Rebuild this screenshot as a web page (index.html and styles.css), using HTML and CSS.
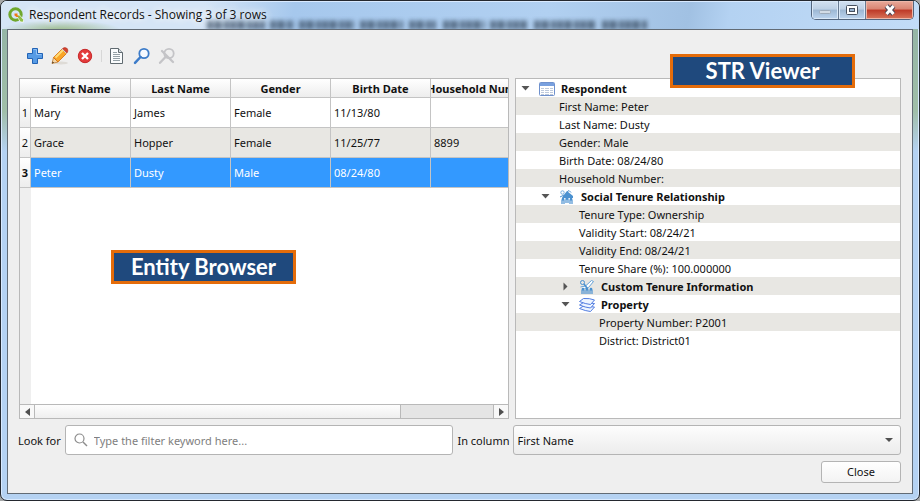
FILE: index.html
```html
<!DOCTYPE html>
<html lang="en">
<head>
<meta charset="utf-8">
<title>Respondent Records</title>
<link rel="stylesheet" href="styles.css">
</head>
<body>
<div class="window">
  <header class="titlebar">
    <svg class="backdrop" width="450" height="14" viewBox="0 0 450 14" aria-hidden="true">
      <g stroke="#26384c" stroke-width="9" stroke-dasharray="6 1 8 2 5 1">
        <path d="M2 9h58M65 9h24M94 9h55M155 9h43M204 9h27M238 9h42M285 9h37M329 9h63M397 9h46"/>
      </g>
    </svg>
    <svg class="app-icon" width="16" height="16" viewBox="0 0 16 16">
      <circle cx="7.5" cy="7.5" r="5.7" fill="none" stroke="#6fa82c" stroke-width="3"/>
      <path d="M8 8h3.5l4 4.5V15h-3z" fill="#8fc04a" stroke="#fff" stroke-width=".7"/>
      <path d="M6.5 6.5h3v2l1.500 1.500h-2.500l-2-1.500z" fill="#ee7913"/>
    </svg>
    <h1 class="title">Respondent Records - Showing 3 of 3 rows</h1>
    <div class="caption-buttons">
      <button class="cap" aria-label="Minimize"><svg width="14" height="12" viewBox="0 0 14 12"><rect x="1.500" y="6.500" width="11" height="3" rx="1" fill="#d3dce6" stroke="#9eabba"/></svg></button>
      <button class="cap" aria-label="Maximize"><svg width="14" height="12" viewBox="0 0 14 12"><rect x="1.500" y="1.500" width="11" height="9" rx="1" fill="#fff" stroke="#47505f"/><rect x="4.500" y="4.500" width="5" height="3" fill="#9bb5d2" stroke="#47505f"/></svg></button>
      <button class="cap cap-close" aria-label="Close window"><svg width="14" height="12" viewBox="0 0 14 12"><path d="M3.500 2l7 8M10.500 2l-7 8" stroke="#4b4353" stroke-width="5"/><path d="M3.500 2l7 8M10.500 2l-7 8" stroke="#fff" stroke-width="3"/></svg></button>
    </div>
  </header>

  <main class="content">
    <div class="toolbar">
      <button class="tool" aria-label="Add"><svg width="18" height="18" viewBox="0 0 18 18"><path d="M6.500 1.500h5v5h5v5h-5v5h-5v-5h-5v-5h5z" fill="#579be5" stroke="#2263b5" stroke-linejoin="round"/><path d="M7.500 2.500h3v5h5" fill="none" stroke="#91c1f4"/></svg></button>
      <button class="tool" aria-label="Edit"><svg width="18" height="18" viewBox="0 0 18 18"><ellipse cx="10" cy="16" rx="7" ry="1.500" fill="#dedbd6"/><path d="M1 16.500l1.500-6 4.500 4.500z" fill="#f3d6a8" stroke="#b86b16" stroke-width=".7"/><path d="M2.500 10.500L11 2l4.500 4.500L7 15z" fill="#f9a528" stroke="#d36b0c" stroke-width=".8"/><path d="M4.500 10.500L12 3" stroke="#ffdc77" stroke-width="2"/><path d="M11.500 1.500q2-1.500 4-.5l1 1q1 2-.5 4z" fill="#d6432c" stroke="#ad2d22" stroke-width=".6"/><path d="M11 2l4.500 4.500" stroke="#d0d0d0"/><path d="M1 16.500l.7-2 1.400 1.300z" fill="#47331e"/></svg></button>
      <button class="tool" aria-label="Delete"><svg width="18" height="18" viewBox="0 0 18 18"><circle cx="9" cy="9" r="6.700" fill="#e33b3b" stroke="#c72829"/><path d="M6 6l6 6M12 6l-6 6" stroke="#fff" stroke-width="2.300"/></svg></button>
      <span class="tool-divider"></span>
      <button class="tool" aria-label="View document"><svg width="18" height="18" viewBox="0 0 18 18"><path d="M2.500 1.500h8l4 4v11h-12z" fill="#fafcfd" stroke="#606a70"/><path d="M10.500 1.500v4h4" fill="#d4dbe0" stroke="#606a70"/><path d="M5 5.500h4M5 7.500h7M5 9.500h7M5 11.500h7M5 13.500h7" stroke="#94a0a6"/></svg></button>
      <button class="tool" aria-label="Search"><svg width="18" height="18" viewBox="0 0 18 18"><circle cx="11" cy="6.500" r="4.700" fill="#f5f9ff" stroke="#3d7cc9" stroke-width="1.800"/><path d="M7.500 10L2 15.800" stroke="#3d7cc9" stroke-width="2.500" stroke-linecap="round"/></svg></button>
      <button class="tool" aria-label="Clear search" disabled><svg width="18" height="18" viewBox="0 0 18 18"><circle cx="11" cy="6.500" r="4.700" fill="none" stroke="#c4c4c7" stroke-width="1.800"/><path d="M7.500 10L2 15.800M4 4l11 11" stroke="#c4c4c7" stroke-width="2.300" stroke-linecap="round"/></svg></button>
    </div>

    <div class="panes">
      <section class="browser" aria-label="Entity Browser">
        <div class="table-area">
          <table class="records">
            <colgroup><col class="col-num"><col class="col"><col class="col"><col class="col"><col class="col"><col class="col"></colgroup>
            <thead><tr><th class="corner"></th><th><span>First Name</span></th><th><span>Last Name</span></th><th><span>Gender</span></th><th><span>Birth Date</span></th><th><span>Household Number</span></th></tr></thead>
            <tbody>
              <tr><th>1</th><td>Mary</td><td>James</td><td>Female</td><td>11/13/80</td><td></td></tr>
              <tr class="alt"><th>2</th><td>Grace</td><td>Hopper</td><td>Female</td><td>11/25/77</td><td>8899</td></tr>
              <tr class="selected"><th>3</th><td>Peter</td><td>Dusty</td><td>Male</td><td>08/24/80</td><td></td></tr>
            </tbody>
          </table>
        </div>
        <div class="scrollbar">
          <button class="scroll-btn" aria-label="Scroll left"><svg width="5" height="8" viewBox="0 0 5 8"><path d="M5 0v8L0 4z" fill="#505050"/></svg></button>
          <div class="scroll-track"><div class="scroll-thumb"></div></div>
          <button class="scroll-btn" aria-label="Scroll right"><svg width="5" height="8" viewBox="0 0 5 8"><path d="M0 0v8l5-4z" fill="#505050"/></svg></button>
        </div>
        <div class="callout callout-browser">Entity Browser</div>
      </section>

      <section class="viewer" aria-label="STR Viewer">
        <ul class="tree">
          <li class="node l0"><svg class="arrow" width="9" height="9" viewBox="0 0 9 9"><path d="M.5 2h8l-4 4.500z" fill="#555"/></svg><svg class="icon" width="16" height="16" viewBox="0 0 16 16"><rect x=".5" y="1.500" width="15" height="13" rx="1" fill="#fff" stroke="#6f91cd"/><path d="M1 2h14v3H1z" fill="#78a0df"/><path d="M2 7.500h12M2 9.500h12M2 11.500h12M2 13.500h12" stroke="#bdc9dc"/><path d="M5.500 5v9M10.500 5v9" stroke="#fff"/></svg><b>Respondent</b></li>
          <li class="leaf l1">First Name: Peter</li>
          <li class="leaf l1">Last Name: Dusty</li>
          <li class="leaf l1">Gender: Male</li>
          <li class="leaf l1">Birth Date: 08/24/80</li>
          <li class="leaf l1">Household Number:</li>
          <li class="node l1"><svg class="arrow" width="9" height="9" viewBox="0 0 9 9"><path d="M.5 2h8l-4 4.500z" fill="#555"/></svg><svg class="icon" width="16" height="16" viewBox="0 0 16 16"><path d="M4 7l4-5 6 5v2H3z" fill="#4b91d0"/><circle cx="3.500" cy="3.500" r="1.700" fill="none" stroke="#74aee0"/><path d="M1 8l4-2M8 3l2-1.500 2 2" fill="none" stroke="#4b91d0"/><g fill="#4b91d0"><circle cx="4" cy="10" r="1.300"/><circle cx="8" cy="9.500" r="1.300"/><circle cx="12" cy="10" r="1.300"/></g><path d="M3 15v-4h2v4M7 14v-4h2v4M11 15v-4h2v4" fill="none" stroke="#4b91d0" stroke-width="1.200"/></svg><b>Social Tenure Relationship</b></li>
          <li class="leaf l2">Tenure Type: Ownership</li>
          <li class="leaf l2">Validity Start: 08/24/21</li>
          <li class="leaf l2">Validity End: 08/24/21</li>
          <li class="leaf l2">Tenure Share (%): 100.000000</li>
          <li class="node l2"><svg class="arrow" width="9" height="9" viewBox="0 0 9 9"><path d="M2.500 .5v8l4-4z" fill="#555"/></svg><svg class="icon" width="16" height="16" viewBox="0 0 16 16"><circle cx="3.500" cy="3.500" r="2" fill="none" stroke="#4b91d0"/><path d="M1.500 8l5-1 6-5.500 2 1-5 6-4 1" fill="#fff" stroke="#67a3d8"/><path d="M5 5l3 4" stroke="#4b91d0" stroke-width="1.500"/><g fill="#4b91d0"><circle cx="4" cy="10" r="1.300"/><circle cx="8" cy="10" r="1.300"/><circle cx="12" cy="10" r="1.300"/></g><path d="M3 15v-4h2v4M7 15v-4h2v4M11 15v-4h2v4" fill="none" stroke="#4b91d0" stroke-width="1.200"/></svg><b>Custom Tenure Information</b></li>
          <li class="node l2"><svg class="arrow" width="9" height="9" viewBox="0 0 9 9"><path d="M.5 2h8l-4 4.500z" fill="#555"/></svg><svg class="icon" width="16" height="16" viewBox="0 0 16 16"><g fill="#eef5ff" stroke="#527de0" stroke-linejoin="round"><path d="M.5 11.500l4-2.500 11 1-4 4.500q-5-.5-11-3z"/><path d="M.5 8l4-2.500 11 1-4 4.500q-5-.5-11-3z"/><path d="M.5 4.500l4-3q6-.5 11 1.500l-4 4.500q-5-.5-11-3z"/></g></svg><b>Property</b></li>
          <li class="leaf l3">Property Number: P2001</li>
          <li class="leaf l3">District: District01</li>
        </ul>
        <div class="callout callout-viewer">STR Viewer</div>
      </section>
    </div>

    <form class="filter">
      <label for="keyword">Look for</label>
      <div class="search">
        <svg width="14" height="14" viewBox="0 0 14 14"><circle cx="5.500" cy="5.500" r="4.500" fill="none" stroke="#8c8c8c" stroke-width="1.200"/><path d="M9 9l4 4" stroke="#8c8c8c" stroke-width="1.500"/></svg>
        <input id="keyword" type="text" placeholder="Type the filter keyword here...">
      </div>
      <label for="column">In column</label>
      <div class="select">
        <select id="column"><option>First Name</option><option>Last Name</option><option>Gender</option><option>Birth Date</option><option>Household Number</option></select>
      </div>
    </form>
    <div class="actions"><button class="close">Close</button></div>
  </main>
</div>
</body>
</html>
```
FILE: styles.css
```css
* { box-sizing: border-box; }

body {
  margin: 0;
  background: #a5a7a8;
  color: #111;
  font: 11px/18px "Noto Sans", "Open Sans", sans-serif;
}

button, input, select { font: inherit; color: inherit; }

.window {
  display: flex;
  flex-direction: column;
  min-height: 100vh;
  padding: 0 6px 6px;
  border: 1px solid #24282f;
  border-radius: 7px;
  background: linear-gradient(#91b3a5 0, #a0bea8 110px, #b5d2f2 150px, #b5d2f2);
  box-shadow: inset 0 0 0 1px #d9eaff;
  overflow: hidden;
}

.titlebar {
  position: relative;
  display: flex;
  align-items: center;
  gap: 5px;
  height: 28px;
  margin: 0 -6px;
  padding-left: 7px;
  background:
    radial-gradient(60px 10px at 60px 29px, #9dbb8c 0, #9dbb8c00 100%),
    linear-gradient(100deg, #d5e5f6 0, #d5e5f6 200px, #a6c8ed 290px, #b1d0f1 540px, #a1c1e3 680px, #b4d2f2 720px, #c2dcf7);
  box-shadow: inset 0 1px #d9eaff;
  overflow: hidden;
}

.backdrop {
  position: absolute;
  bottom: -1px;
  left: 204px;
  filter: blur(2px);
  opacity: .6;
}

.app-icon { position: relative; }

.title {
  position: relative;
  flex: 1;
  margin: 0;
  font-family: "Open Sans", "Noto Sans", sans-serif;
  font-size: 12px;
  font-weight: normal;
  text-shadow: 0 0 8px #fff, 0 0 8px #fff;
}

.caption-buttons {
  position: relative;
  display: flex;
  align-self: flex-start;
  margin-right: 5px;
  border: 1px solid #53657d;
  border-top: 0;
  border-radius: 0 0 5px 5px;
  overflow: hidden;
}

.cap {
  display: grid;
  place-items: center;
  width: 27px;
  height: 18px;
  padding: 0;
  border: 0;
  border-right: 1px solid #687a91;
  background: linear-gradient(#d3e1f1 0, #bdd0e5 45%, #9db7d3 50%, #bdd5ef);
  box-shadow: inset 0 0 0 1px #dae8f7;
}

.cap-close {
  width: 47px;
  border: 0;
  background: linear-gradient(#e9aa9b 0, #d98472 45%, #bd3927 50%, #d8755b);
  box-shadow: inset 0 0 0 1px #edb7a9;
}

.content {
  display: flex;
  flex: 1;
  flex-direction: column;
  padding: 14px 11px 10px;
  border: 1px solid #626b75;
  background: #efefef;
}

.toolbar {
  display: flex;
  align-items: center;
  gap: 7px;
  height: 24px;
  margin-bottom: 10px;
  padding-left: 7px;
}

.tool {
  display: grid;
  width: 18px;
  height: 18px;
  padding: 0;
  border: 0;
  background: none;
}

.tool-divider {
  width: 1px;
  height: 12px;
  margin-right: -1px;
  background: #d7d7d7;
}

.panes {
  display: grid;
  flex: 1;
  grid-template-columns: minmax(0, 490fr) minmax(0, 386fr);
  gap: 6px;
}

.browser, .viewer {
  position: relative;
  border: 1px solid #b9b9b9;
  background: #fff;
}

.browser {
  display: flex;
  flex-direction: column;
}

.table-area {
  flex: 1;
  background: linear-gradient(#efefef, #efefef) left / 11px 100% no-repeat;
  overflow: hidden;
}

.records {
  width: 511px;
  table-layout: fixed;
  border-collapse: separate;
  border-spacing: 0;
}

.col-num { width: 11px; }
.col { width: 100px; }

.records th, .records td {
  height: 30px;
  padding: 1px 3px 0;
  border-right: 1px solid #c4c4c4;
  border-bottom: 1px solid #c4c4c4;
  text-align: left;
}

.records th {
  padding: 1px 0 0;
  background: linear-gradient(#fff, #ededed);
}

.records thead th { height: 19px; }
.records thead .corner { border-right: 0; }

.records th span {
  display: flex;
  justify-content: center;
  line-height: 17px;
  white-space: nowrap;
  overflow: hidden;
}

.records tbody th {
  font-weight: normal;
  text-align: center;
}

.alt td { background: #e8e7e3; }
.records .selected th { font-weight: bold; }

.selected td {
  background: #3399ff;
  color: #fff;
}

.scrollbar {
  display: flex;
  height: 14px;
  border-top: 1px solid #b9b9b9;
}

.scroll-btn {
  display: grid;
  place-items: center;
  width: 14px;
  padding: 0;
  border: 0;
  background: #f8f8f8;
}

.scroll-track {
  flex: 1;
  border: solid #b9b9b9;
  border-width: 0 1px;
  background: #e5e5e5;
}

.scroll-thumb {
  width: 80%;
  height: 100%;
  border-right: 1px solid #b9b9b9;
  background: linear-gradient(#fdfdfd, #efefef);
}

.callout {
  position: absolute;
  width: 185px;
  border: 3px solid #e46c0a;
  background: #1f497d;
  color: #fff;
  font: bold 22px/28px Lato, sans-serif;
  text-align: center;
}

.callout-browser {
  top: 171px;
  left: 91px;
}

.callout-viewer {
  top: -25px;
  right: 45px;
}

.tree {
  margin: 0;
  padding: 0;
  list-style: none;
}

.tree li {
  display: flex;
  align-items: center;
  height: 18px;
  padding-top: 1px;
  white-space: nowrap;
}

.tree li:nth-child(even) { background: #e8e7e3; }

.tree .node { padding-left: 5px; }
.tree .node.l1 { padding-left: 25px; }
.tree .node.l2 { padding-left: 45px; }
.tree .leaf.l1 { padding-left: 43px; }
.tree .leaf.l2 { padding-left: 63px; }
.tree .leaf.l3 { padding-left: 83px; }

.arrow { margin-right: 9px; }
.icon { margin-right: 6px; }

.filter {
  display: flex;
  align-items: center;
  gap: 4px;
  margin: 6px 0;
}

.filter label { margin-left: -1px; padding-top: 1px; }
.search + label { margin-left: 0; }

.search, .select {
  display: flex;
  align-items: center;
  height: 30px;
  border: 1px solid #b4b4b4;
  border-radius: 3px;
  background: #fff;
}

.search {
  flex: 386;
  gap: 6px;
  padding-left: 8px;
}

.search input {
  flex: 1;
  min-width: 0;
  padding: 1px 0 0;
  border: 0;
  outline: 0;
  background: none;
}

.search input::placeholder { color: #808080; }

.select {
  position: relative;
  flex: 393;
  background: linear-gradient(#fdfdfd, #ececec);
}

.select select {
  width: 100%;
  height: 100%;
  padding: 1px 24px 0 3px;
  border: 0;
  background: none;
  appearance: none;
}

.select::after {
  position: absolute;
  right: 7px;
  border: 4px solid transparent;
  border-top-color: #505050;
  border-bottom: 0;
  content: "";
}

.actions {
  display: flex;
  justify-content: flex-end;
}

.close {
  width: 80px;
  height: 22px;
  padding: 0;
  border: 1px solid #b4b4b4;
  border-radius: 3px;
  background: linear-gradient(#fff, #f3f3f3);
}
```
